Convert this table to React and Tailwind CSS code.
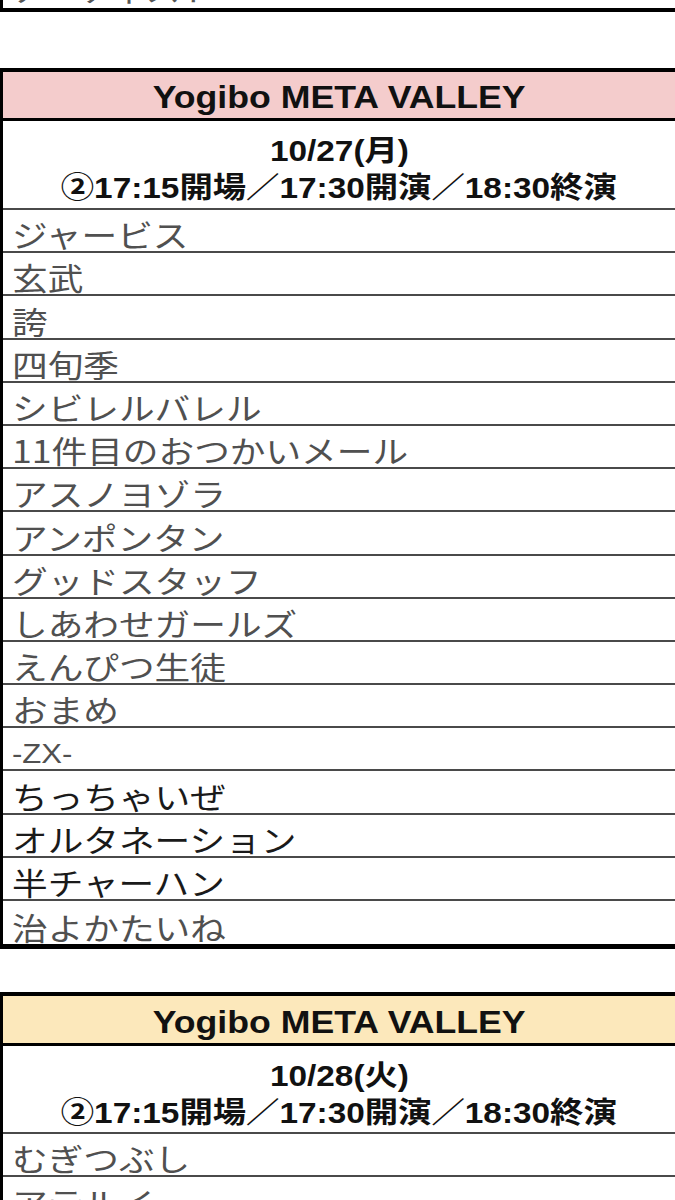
import React from 'react';

const jp = { fontFamily: '"Noto Sans CJK JP", "Noto Sans", sans-serif' };
const bold = { fontFamily: '"Liberation Sans", "Noto Sans CJK JP", Arial, sans-serif' };

const day1 = [
  { name: 'ジャービス' },
  { name: '玄武' },
  { name: '誇' },
  { name: '四旬季' },
  { name: 'シビレルバレル' },
  { name: '11件目のおつかいメール' },
  { name: 'アスノヨゾラ' },
  { name: 'アンポンタン' },
  { name: 'グッドスタッフ' },
  { name: 'しあわせガールズ' },
  { name: 'えんぴつ生徒' },
  { name: 'おまめ' },
  { name: '-ZX-', latin: true },
  { name: 'ちっちゃいぜ', dark: true },
  { name: 'オルタネーション', dark: true },
  { name: '半チャーハン', dark: true },
  { name: '治よかたいね' },
];

const Row = ({ name, dark, latin, last }) => (
  <div
    className={`h-[43.2px] flex items-end pl-[9px] ${last ? '' : 'border-b-2 border-[#4a4a4a]'}`}
  >
    <span
      className={`inline-block origin-left scale-x-[1.15] leading-none whitespace-nowrap ${latin ? 'text-[27px] mb-[1px]' : 'text-[31px] mb-[2px]'} ${dark ? 'text-[#1a1a1a]' : 'text-[#505050]'}`}
      style={latin ? bold : jp}
    >
      {name}
    </span>
  </div>
);

const Venue = ({ bg, date, headH, dateH }) => (
  <>
    <div className={`${headH} ${bg} border-b-[3px] border-black flex items-center justify-center pt-[5px]`}>
      <span className="inline-block scale-x-[1.15] text-[31px] font-bold text-[#111] leading-none" style={bold}>
        Yogibo META VALLEY
      </span>
    </div>
    <div className={`${dateH} border-b-2 border-[#4a4a4a] flex flex-col items-center justify-center gap-[8px] pt-[11px]`}>
      <span className="inline-block scale-x-[1.15] text-[29px] font-bold text-[#111] leading-none" style={bold}>
        {date}
      </span>
      <span className="inline-block scale-x-[1.15] text-[29px] font-bold text-[#111] leading-none whitespace-nowrap" style={bold}>
        ②17:15開場／17:30開演／18:30終演
      </span>
    </div>
  </>
);

export default function App() {
  return (
    <div className="w-[675px] h-[1200px] overflow-hidden bg-white">
      {/* previous table tail */}
      <div className="border-l-[3px] border-black">
        <div className="h-[8px] overflow-hidden pl-[9px]">
          <span className="block -mt-[27px] text-[30px] leading-none text-[#555] origin-left scale-x-[1.15]" style={jp}>
            アーティスト
          </span>
        </div>
      </div>
      <div className="h-[4px] bg-black" />

      <div className="h-[56px]" />

      {/* 10/27 */}
      <div className="border-l-[3px] border-t-4 border-black">
        <Venue bg="bg-[#f4cccc]" date="10/27(月)" headH="h-[49px]" dateH="h-[89px]" />
        {day1.map((r, i) => (
          <Row key={r.name} {...r} last={i === day1.length - 1} />
        ))}
      </div>
      <div className="h-[5px] bg-black" />

      <div className="h-[43px]" />

      {/* 10/28 */}
      <div className="border-l-[3px] border-t-4 border-black">
        <Venue bg="bg-[#fce8bb]" date="10/28(火)" headH="h-[50px]" dateH="h-[88px]" />
        <Row name="むぎつぶし" />
        <Row name="アテルイ" />
      </div>
    </div>
  );
}
